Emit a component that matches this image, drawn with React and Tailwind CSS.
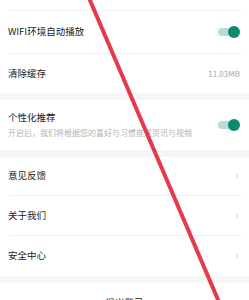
import React from "react";

const FONT = { fontFamily: '"Noto Sans CJK SC", "Noto Sans", sans-serif' };

function Toggle() {
  return (
    <div className="relative h-[12px] w-[24px] shrink-0">
      <div className="absolute left-[2px] right-[2px] top-[2px] h-[8px] rounded-full bg-[#b5ddd5]" />
      <div className="absolute right-0 top-0 h-[12px] w-[12px] rounded-full bg-[#0b8a70]" />
    </div>
  );
}

function Chevron() {
  return (
    <svg width="6" height="8" viewBox="0 0 6 8" className="shrink-0">
      <path d="M1.5 1 L4.5 4 L1.5 7" fill="none" stroke="#cfcfcf" strokeWidth="1" />
    </svg>
  );
}

function Divider() {
  return <div className="ml-[10px] mr-[8px] h-px bg-[#f0f0f0]" />;
}

function Band() {
  return <div className="h-[7px] bg-[#f6f6f6]" />;
}

function Row({ label, height, right }) {
  return (
    <div className={`flex items-center justify-between pl-[8px] pr-[9px] ${height}`}>
      <span className="text-[9.5px] leading-none text-[#222]">{label}</span>
      {right}
    </div>
  );
}

export default function App() {
  return (
    <div className="relative h-[300px] w-[249px] overflow-hidden bg-white" style={FONT}>
      <div className="h-[10px]" />
      <Divider />
      <Row label="WIFI环境自动播放" height="h-[42px]" right={<Toggle />} />
      <Divider />
      <Row
        label="清除缓存"
        height="h-[39px]"
        right={<span className="text-[8px] leading-none text-[#a8a8a8]">11.03MB</span>}
      />
      <Band />
      <div className="flex h-[50px] items-center justify-between pl-[8px] pr-[9px]">
        <div className="flex flex-col gap-[6px]">
          <span className="text-[9.5px] leading-none text-[#222]">个性化推荐</span>
          <span className="text-[8px] leading-none text-[#b3b3b3]">开启后，我们将根据您的喜好与习惯推送资讯与视频</span>
        </div>
        <Toggle />
      </div>
      <Band />
      <Row label="意见反馈" height="h-[38px]" right={<Chevron />} />
      <Divider />
      <Row label="关于我们" height="h-[39px]" right={<Chevron />} />
      <Divider />
      <Row label="安全中心" height="h-[40px]" right={<Chevron />} />
      <Band />
      <div className="flex h-[40px] items-center justify-center">
        <span className="text-[9.5px] leading-none text-[#222]">退出登录</span>
      </div>

      <svg className="pointer-events-none absolute left-0 top-0" width="249" height="300" viewBox="0 0 249 300">
        <line x1="89" y1="-2" x2="219" y2="302" stroke="#e23b4c" strokeWidth="4" />
      </svg>
    </div>
  );
}
